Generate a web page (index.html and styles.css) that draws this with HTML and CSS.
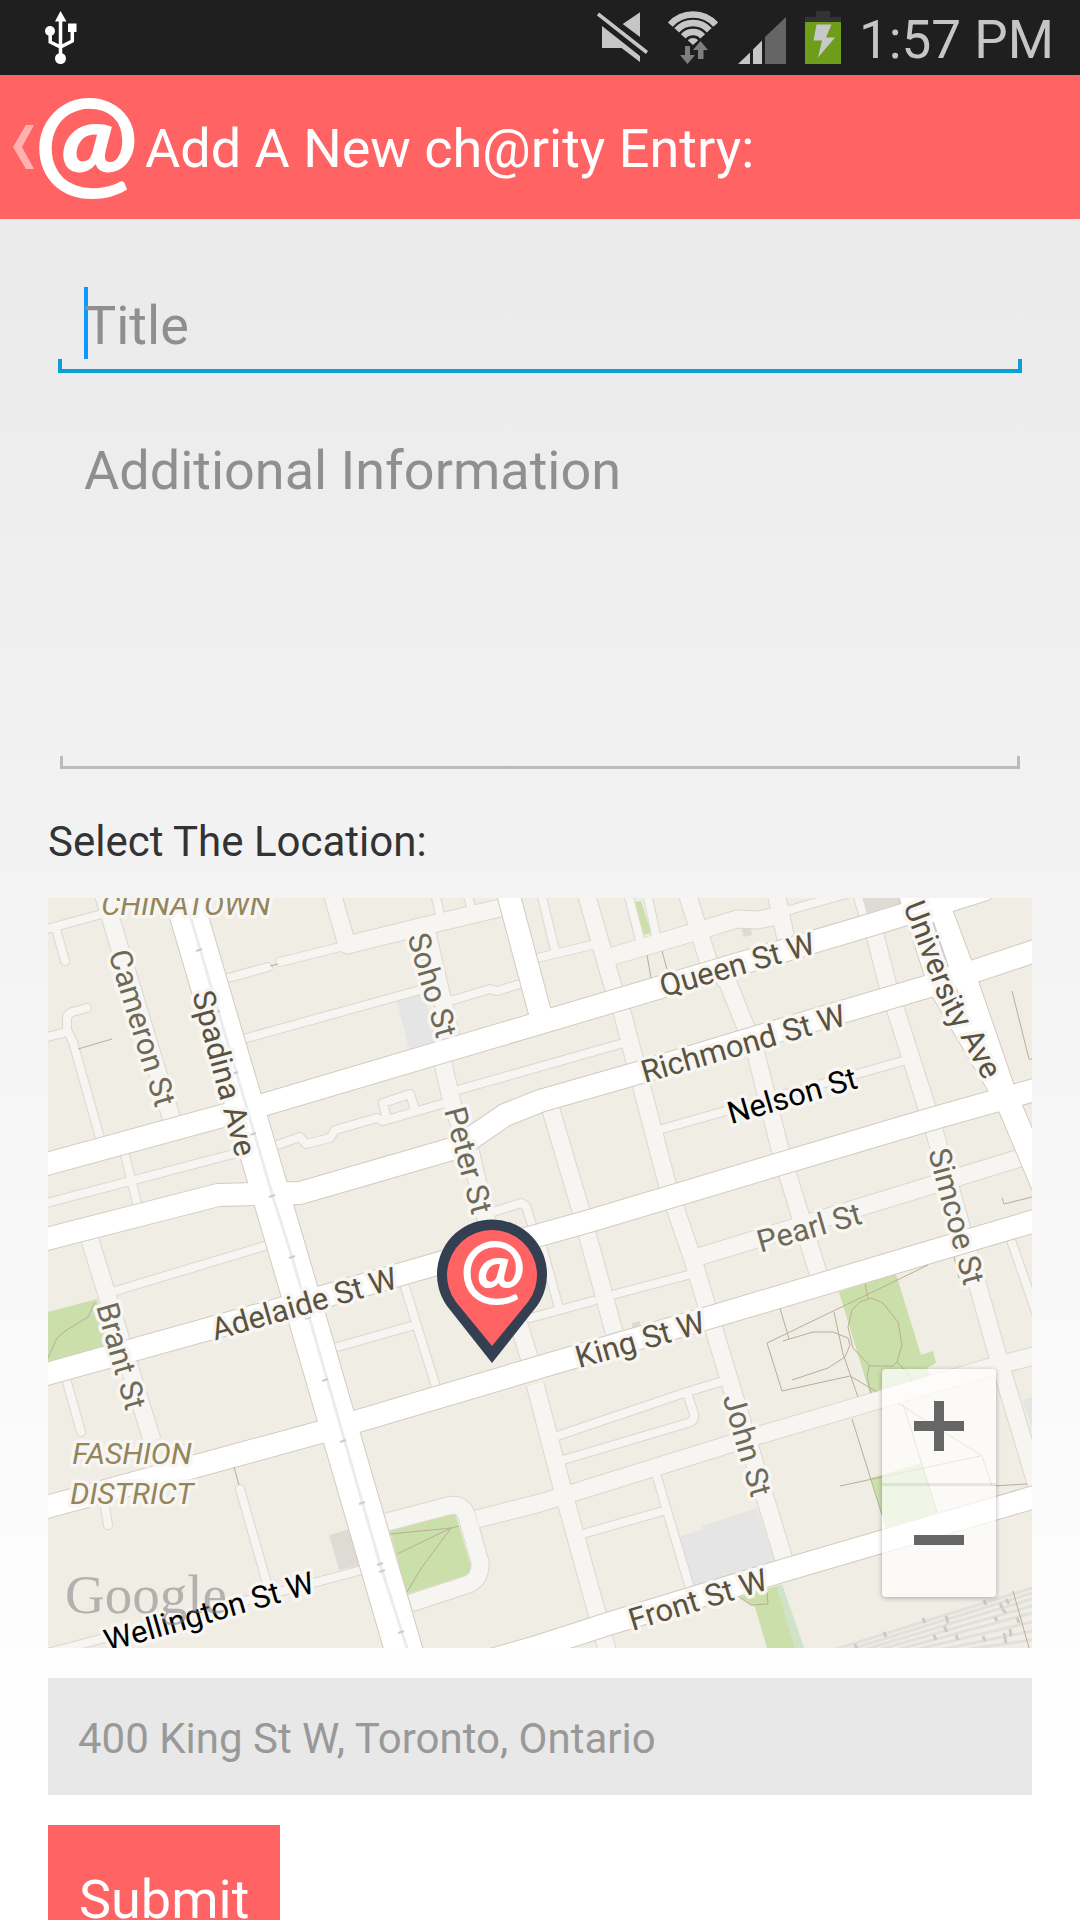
FILE: index.html
```html
<!DOCTYPE html>
<html lang="en">
<head>
<meta charset="UTF-8">
<meta name="viewport" content="width=device-width, initial-scale=1.0">
<title>Add A New ch@rity Entry</title>
<link rel="stylesheet" href="styles.css">
</head>
<body>
<!-- Status bar -->
<div class="status-bar">
    <svg class="usb" width="32" height="53" viewBox="0 0 32 53" fill="#fff">
        <path d="M15.5 0 L21.5 10.5 H10 Z"/>
        <circle cx="5" cy="20" r="5"/>
        <rect x="23" y="12.5" width="8.5" height="8.5"/>
        <circle cx="15.5" cy="47.5" r="5.5"/>
        <path d="M15.5 8 V45 M5.2 22 V31 L15.5 36 L27.3 30 V20" fill="none" stroke="#fff" stroke-width="3.5"/>
    </svg>
    <div class="status-icons">
        <svg width="52" height="53" viewBox="0 -1 52 53" fill="#c6c6c6">
            <path d="M1 2 L50 40.5" stroke="#c6c6c6" stroke-width="3.5"/>
            <path d="M25.7 12 L43 0.3 V25 Z"/>
            <path d="M5 14 L43 44 V50 L24.6 36 H5 Z"/>
        </svg>
        <svg width="53" height="53" viewBox="0 0 53 53">
            <g fill="none" stroke="#c6c6c6" stroke-width="6.5">
                <path d="M3.3 13.6 A30.5 30.5 0 0 1 48.7 13.6"/>
                <path d="M9.7 19.3 A22 22 0 0 1 42.3 19.3"/>
                <path d="M16.3 25.3 A13 13 0 0 1 35.7 25.3"/>
            </g>
            <path d="M26 34 L20.8 29.3 A7 7 0 0 1 31.2 29.3 Z" fill="#c6c6c6"/>
            <path d="M18 35 H23 V44 H28 L20.5 53 L13 44 H18 Z M33.5 30 L41 39 H36.5 V48 H31 V39 H26 Z" fill="#7e7e7e"/>
        </svg>
        <svg width="49" height="53" viewBox="0 -6 49 53">
            <path d="M0 47 L12 35.5 V47 Z M15 47 V32.5 L24 23.5 V47 Z" fill="#c6c6c6"/>
            <path d="M27 47 V20 L48 0 V47 Z" fill="#656565"/>
        </svg>
        <svg width="36" height="53" viewBox="0 0 36 53">
            <path d="M11 0 H25 V6 H36 V11 H0 V6 H11 Z" fill="#333"/>
            <rect y="11" width="36" height="42" fill="#6e9e19"/>
            <path d="M11.5 13.5 H26.5 L21 26.5 H30 L13 46.5 L17 29.5 H8.5 Z" fill="#c8c8c8"/>
        </svg>
        <span class="clock">1:57 PM</span>
    </div>
</div>

<!-- Action bar -->
<header class="action-bar">
    <a href="#" class="back" aria-label="Back">
        <svg width="21" height="44" viewBox="0 0 21 44"><path d="M0 22 L13 0 H21 L9 22 L21 44 H13 Z" fill="#ffb1b1"/></svg>
        <span class="logo">@</span>
    </a>
    <h1>Add A New ch@rity Entry:</h1>
</header>

<form class="entry-form" action="#" method="POST">
    <input type="text" class="field title-field" name="title" placeholder="Title" aria-label="Title">
    <textarea class="field info-field" name="info" placeholder="Additional Information" aria-label="Additional Information"></textarea>

    <label class="location-label" for="address">Select The Location:</label>

    <div class="map">
        <svg class="map-canvas" viewBox="0 0 984 750" preserveAspectRatio="xMidYMid slice">
            <defs>
                <g id="lanes">
                    <path d="M-5 32 L54 16 M8 31 L17 63"/>
                    <path d="M-5 140 L19 134 M39 110 L24 114 Q18 116 19 124 L19 132 L25 144 L52 240"/>
                    <path d="M-5 306 L189 255 M77 257 L89 305"/>
                    <path d="M64 394 L220 347 M180 80 L220 69 M232 64 L292 49"/>
                    <path d="M387 -5 L392 17 M419 -5 L423 9"/>
                    <path d="M199 140 L372 92 M402 103 L442 91 L449 93 L472 86"/>
                    <path d="M229 247 L252 239 L258 246 L282 240 L287 232 L329 220 L335 223 L397 205"/>
                    <path d="M339 222 L335 205 L362 196 L367 212"/>
                    <path d="M410 192 L572 146 M445 314 L473 305 L478 308 L484 327"/>
                    <path d="M485 61 L544 47 M493 -5 L507 52 M580 -5 L592 42 M599 -5 L608 37"/>
                    <path d="M738 13 L805 -6 M809 -5 L815 17"/>
                    <path d="M614 231 L855 163 M964 345 L990 420"/>
                    <path d="M482 420 L545 403 M564 397 L640 377 M493 345 L511 410"/>
                    <path d="M289 449 L367 427 M357 389 L388 489"/>
                    <path d="M19 484 L33 534 M57 609 L60 627 M192 591 L218 682"/>
                    <path d="M0 755 L314 672"/>
                    <path d="M509 538 L639 494 L672 484 M515 562 L640 525 Q647 523 646 516 L639 495"/>
                    <path d="M609 579 L642 690 M538 635 L615 613"/>
                </g>
                <g id="streets">
                    <path d="M55 -5 L124 222 M42 342 L104 542"/>
                    <path d="M284 -5 L299 47 L372 29 L452 10"/>
                    <path d="M379 35 L403 139 M395 165 L405 209 L422 252 L437 317 L482 462 M487 486 L514 589 L560 755"/>
                    <path d="M538 -5 L566 92 L574 114 L620 289 L645 362 L661 415 L737 665"/>
                    <path d="M639 -5 L661 65 L680 85 L707 152 L733 255 L770 375"/>
                    <path d="M565 58 L650 33 L689 21 L709 22 L725 19 M728 -5 L740 50"/>
                    <path d="M827 37 L840 88 L879 210 L886 232 L915 335 L950 459 L992 598"/>
                    <path d="M647 360 L975 259"/>
                    <path d="M503 212 L533 313 L566 434"/>
                    <path d="M339 624 L400 608 Q416 604 420 622 L432 664 Q433 680 421 686 L363 705"/>
                    <path d="M429 621 L492 605 L705 539 L939 470 L990 457"/>
                </g>
                <g id="avenues">
                    <path d="M-5 267 L218 206 L485 127 L829 25 L935 -8 M460 -5 L492 115"/>
                    <path d="M-5 342 L170 297 L252 295 L404 251 L422 241 L457 217 L492 203 L583 177 L699 142 L885 87 L990 52"/>
                    <path d="M-5 477 L236 410 L392 365 L545 322 L745 262 L890 219 L990 191"/>
                    <path d="M-5 610 L273 534 L492 469 L670 417 L912 345 L990 322"/>
                    <path d="M440 763 L492 748 L563 725 L737 672 L990 598"/>
                </g>
                <path id="spadina" d="M134 -5 L251 392 L357 757"/>
                <path id="university" d="M850 -5 L877 78 L885 99 L940 192 L952 215 L990 305 V245 L974 207 L965 185 L930 83 L923 62 L898 -5 Z"/>
            </defs>

            <rect width="984" height="750" fill="#f0ede5"/>

            <!-- Parks and buildings -->
            <g fill="#cadfaa">
                <path d="M0 414 L49 401 L62 447 L0 464 Z"/>
                <path d="M342 633 L407 615 L424 672 L419 677 L359 696 Z"/>
                <path d="M791 394 L848 376 L873 457 L885 453 L888 465 L879 470 L883 479 L822 496 Z"/>
                <path d="M823 580 L874 565 L889 615 L838 630 Z"/>
                <path d="M691 699 L729 688 L747 750 H719 L707 709 Z"/>
            </g>
            <path d="M729 688 L734 686 L756 750 H747 Z" fill="#cfe3c8"/>
            <g fill="#e5e5e5">
                <path d="M349 103 L374 95 L392 142 L361 151 Z"/>
                <path d="M632 638 L654 632 V628 L709 610 L727 664 L645 688 Z"/>
                <path d="M974 502 L984 499 V529 Z"/>
            </g>
            <g fill="#dedad4">
                <path d="M281 637 L302 631 L313 667 L291 672 Z"/>
                <path d="M815 0 H854 V5 L819 15 Z"/>
                <path d="M584 425 L592 423 V430 H584 Z"/>
            </g>

            <!-- Rail yard -->
            <g class="rails">
                <path d="M785 752 L984 690 M800 752 L984 695 M815 752 L984 701 M830 752 L984 708 M848 752 L984 715 M866 752 L984 724 M890 752 L984 733 M915 752 L984 742"/>
                <path class="rail-ticks" d="M807 746 L809 751 M836 734 L838 739 M875 720 L877 725 M898 718 L900 725 M896 728 L899 734 M886 737 L888 742 M908 737 L910 742 M936 702 L938 707 M952 705 L954 710 M958 701 L961 706 M954 711 L958 715 M947 719 L949 723 M969 720 L971 725 M935 738 L937 743 M956 735 L958 745 M962 731 L963 738"/>
            </g>

            <use href="#lanes" class="lane-edge"/>
            <use href="#streets" class="street-edge"/>
            <use href="#lanes" class="lane"/>
            <use href="#streets" class="street"/>
            <path d="M587 4 L593 3 L603 35 L596 37 Z" fill="#cadfaa"/>
            <path d="M694 31 L703 30 L704 37 L695 39 Z" fill="#dedad4"/>
            <use href="#avenues" class="avenue-edge"/>
            <use href="#spadina" class="spadina-edge"/>
            <use href="#university" class="university-edge"/>
            <use href="#avenues" class="avenue"/>
            <use href="#spadina" class="spadina"/>
            <use href="#university" class="university"/>

            <!-- Streetcar line -->
            <path d="M137 0 L225 299 L244 359 L332 666 L359 750" class="tram"/>
            <path d="M148 53 L154 51 M166 115 L172 113 M184 176 L190 174 M202 237 L208 235 M221 299 L227 297 M241 360 L247 358 M257 421 L263 419 M274 483 L280 481 M292 544 L298 542 M311 606 L317 604 M329 667 L335 665 M331 674 L337 672 M350 735 L356 733" class="tram-stops"/>
            <path d="M885 24 L900 69 M908 90 L913 107" class="tram-stops"/>

            <!-- Footpaths -->
            <g class="paths">
                <path d="M30 151 L64 141 M222 68 L230 66 M186 569 L191 587 M599 57 L603 80 M614 53 L620 75"/>
                <path d="M964 93 L981 161 H984 M954 300 L956 306 L984 299 M906 359 L911 380"/>
                <path d="M0 460 L9 440 L17 433 L40 419 L47 404"/>
                <path d="M342 636 L403 630 L411 628 M349 656 L403 630 M359 694 L372 672 L403 630"/>
                <path d="M691 699 L703 707 L720 706 L719 694 M965 693 L981 750"/>
                <path d="M732 410 L741 441 M735 443 L765 434 H785 L800 440 L802 447 L797 459 L780 470 L744 482"/>
                <path d="M880 367 L837 388 L719 445 L734 493 L802 478 L829 494"/>
                <path d="M786 414 L795 456 L810 499 M804 521 L834 617"/>
                <path d="M823 400 L835 405 L850 424 L854 447 L849 464 L845 468 H822 L805 450 L800 429 L804 412 L812 404 Z"/>
                <path d="M817 386 L820 400 M821 468 L819 479 L823 495 M849 464 L859 474 L864 484"/>
                <path d="M792 588 L932 558 M850 505 L934 558 L944 588 L979 586 M855 506 L889 614"/>
            </g>

            <!-- Labels -->
            <defs>
                <path id="university-label" d="M855 8 L882 78 Q897 120 915 144 L954 216"/>
            </defs>
            <g class="labels" text-anchor="middle">
                <text transform="translate(692 77) rotate(-16)">Queen St W</text>
                <text transform="translate(698 156) rotate(-16)">Richmond St W</text>
                <text transform="translate(259 416) rotate(-16)">Adelaide St W</text>
                <text transform="translate(595 452) rotate(-16)">King St W</text>
                <text transform="translate(653 712) rotate(-17)">Front St W</text>
                <text transform="translate(166 178) rotate(75)">Spadina Ave</text>
                <text text-anchor="start"><textPath href="#university-label">University Ave</textPath></text>
            </g>
            <g class="labels minor" text-anchor="middle">
                <text transform="translate(764 340) rotate(-16)">Pearl St</text>
                <text transform="translate(84 133) rotate(73)">Cameron St</text>
                <text transform="translate(374 90) rotate(74)">Soho St</text>
                <text transform="translate(410 265) rotate(75)">Peter St</text>
                <text transform="translate(898 321) rotate(75)">Simcoe St</text>
                <text transform="translate(63 461) rotate(74)">Brant St</text>
                <text transform="translate(689 550) rotate(74)">John St</text>
            </g>
            <g class="labels strong" text-anchor="middle">
                <text transform="translate(747 208) rotate(-16)">Nelson St</text>
                <text transform="translate(164 724) rotate(-16)">Wellington St W</text>
            </g>
            <g class="labels district" text-anchor="middle">
                <text x="138" y="17">CHINATOWN</text>
                <text x="84" y="566">FASHION</text>
                <text x="84" y="606">DISTRICT</text>
            </g>
            <text class="google" x="17" y="715">Google</text>

            <!-- Pin -->
            <path d="M444 465 L399 408 A55 55 0 1 1 489 408 Z" fill="#344052"/>
            <path d="M444 448 L408 404 A45 45 0 1 1 480 404 Z" fill="#ff6363"/>
            <text class="pin-at" x="445" y="398" text-anchor="middle">@</text>
        </svg>

        <div class="zoom">
            <button type="button" aria-label="Zoom in">
                <svg width="50" height="50" viewBox="0 0 50 50"><path d="M20 0 H30 V20 H50 V30 H30 V50 H20 V30 H0 V20 H20 Z" fill="#666"/></svg>
            </button>
            <button type="button" aria-label="Zoom out">
                <svg width="50" height="50" viewBox="0 0 50 50"><path d="M0 20 H50 V30 H0 Z" fill="#666"/></svg>
            </button>
        </div>
    </div>

    <input type="text" class="address" id="address" name="address" placeholder="400 King St W, Toronto, Ontario">

    <button type="submit" class="submit-btn">Submit</button>
</form>
</body>
</html>
```

FILE: styles.css
```css
* {
    box-sizing: border-box;
}
body {
    display: flex;
    flex-direction: column;
    height: 100vh;
    margin: 0;
    overflow: hidden;
    font-family: Roboto, sans-serif;
    background: #fff;
}
input, textarea, button {
    font-family: inherit;
    border: none;
    border-radius: 0;
    outline: none;
}
svg {
    display: block;
}

/* Status bar */
.status-bar {
    display: flex;
    flex-shrink: 0;
    justify-content: space-between;
    align-items: center;
    height: 75px;
    padding: 0 26px 0 45px;
    background: #1f1f1f;
}
.status-icons {
    display: flex;
    align-items: center;
    gap: 18px;
}
.clock {
    padding-top: 4px;
    font-size: 53px;
    line-height: 70px;
    color: #c6c6c6;
}

/* Action bar */
.action-bar {
    display: flex;
    flex-shrink: 0;
    align-items: center;
    gap: 10px;
    height: 144px;
    padding-left: 13px;
    background: #ff6363;
    color: #fff;
}
.back {
    display: flex;
    align-items: center;
    color: #fff;
    text-decoration: none;
}
.logo {
    width: 101px;
    padding-bottom: 22px;
    text-align: center;
    font: 900 124px/120px Lato, sans-serif;
}
.action-bar h1 {
    margin: 0;
    padding-top: 2px;
    font-size: 54px;
    font-weight: 400;
}

/* Form */
.entry-form {
    display: flex;
    flex: 1 0 auto;
    flex-direction: column;
    padding: 58px 48px 0;
    background: linear-gradient(#eaeaea, #fff 1550px);
}
.field {
    margin: 0 10px;
    padding: 12px 26px 8px;
    font-size: 54px;
    line-height: 72px;
    color: #333;
    resize: none;
}
.field::placeholder {
    color: #8f8f8f;
    opacity: 1;
}
.title-field {
    height: 96px;
    margin-bottom: 50px;
    border-bottom: 4px solid #0b9fd2;
    background:
        linear-gradient(#0a9aff, #0a9aff) 26px 10px / 4px 72px no-repeat,
        linear-gradient(#0b9fd2, #0b9fd2) left bottom / 4px 10px no-repeat,
        linear-gradient(#0b9fd2, #0b9fd2) right bottom / 4px 10px no-repeat;
}
.info-field {
    height: 346px;
    margin: 0 12px;
    padding: 12px 24px 8px;
    border-bottom: 3px solid #bbb;
    background:
        linear-gradient(#bbb, #bbb) left bottom / 3px 10px no-repeat,
        linear-gradient(#bbb, #bbb) right bottom / 3px 10px no-repeat;
}
.location-label {
    margin: 48px 0 31px;
    font-size: 42px;
    line-height: 50px;
    color: #333;
}

/* Map */
.map {
    position: relative;
    height: 750px;
    margin-bottom: 30px;
    overflow: hidden;
}
.map-canvas {
    width: 100%;
    height: 100%;
}
.lane, .lane-edge, .street, .street-edge, .avenue, .avenue-edge, .spadina, .spadina-edge {
    fill: none;
    stroke-linecap: round;
    stroke-linejoin: round;
}
.street, .street-edge {
    stroke-linecap: butt;
}
.lane-edge, .street-edge {
    stroke: #dcd7ce;
}
.lane, .street {
    stroke: #f7f5f1;
}
.avenue-edge, .spadina-edge {
    stroke: #d2ccbe;
}
.avenue, .spadina {
    stroke: #fff;
}
.lane-edge {
    stroke-width: 10px;
}
.lane {
    stroke-width: 8px;
}
.street-edge {
    stroke-width: 19px;
}
.street {
    stroke-width: 17px;
}
.avenue-edge {
    stroke-width: 24px;
}
.avenue {
    stroke-width: 22px;
}
.spadina-edge {
    stroke-width: 39px;
}
.spadina {
    stroke-width: 37px;
}
.university-edge {
    fill: #fff;
    stroke: #d2ccbe;
    stroke-width: 2px;
}
.university {
    fill: #fff;
}
.tram, .tram-stops, .paths, .rails {
    fill: none;
}
.tram {
    stroke: #ececec;
    stroke-width: 3px;
}
.tram-stops {
    stroke: #ccc;
    stroke-width: 2px;
}
.paths {
    stroke: #b9ae99;
    stroke-width: 1px;
}
.rails {
    stroke: #e2e0dc;
    stroke-width: 3px;
}
.rail-ticks {
    stroke: #cbcac8;
}
.labels {
    font-size: 31px;
    fill: #5a5240;
    stroke: #f8f6f2;
    stroke-width: 7px;
    stroke-linejoin: round;
    paint-order: stroke;
}
.minor {
    fill: #6e6a58;
}
.strong {
    fill: #000;
}
.district {
    font-size: 30px;
    font-style: italic;
    fill: #94855c;
}
.google {
    font-family: "Liberation Serif", serif;
    font-size: 55px;
    fill: #777;
    opacity: 0.5;
}
.pin-at {
    font: bold 78px Lato, sans-serif;
    fill: #fff;
}
.zoom {
    position: absolute;
    right: 36px;
    bottom: 51px;
    width: 114px;
    border-radius: 4px;
    background: rgba(255, 255, 255, 0.7);
    box-shadow: 0 1px 5px rgba(0, 0, 0, 0.3);
}
.zoom button {
    display: flex;
    justify-content: center;
    align-items: center;
    width: 100%;
    height: 114px;
    padding: 0;
    background: none;
}
.zoom button + button {
    box-shadow: inset 0 3px rgba(0, 0, 0, 0.08);
}

.address {
    width: 100%;
    height: 117px;
    margin-bottom: 30px;
    padding: 4px 30px 0;
    font-size: 42px;
    background: #e8e8e8;
}
.address::placeholder {
    color: #999;
    opacity: 1;
}
.submit-btn {
    align-self: flex-start;
    height: 148px;
    padding: 0 31px;
    font-size: 54px;
    color: #fff;
    background: #ff6363;
}
```
